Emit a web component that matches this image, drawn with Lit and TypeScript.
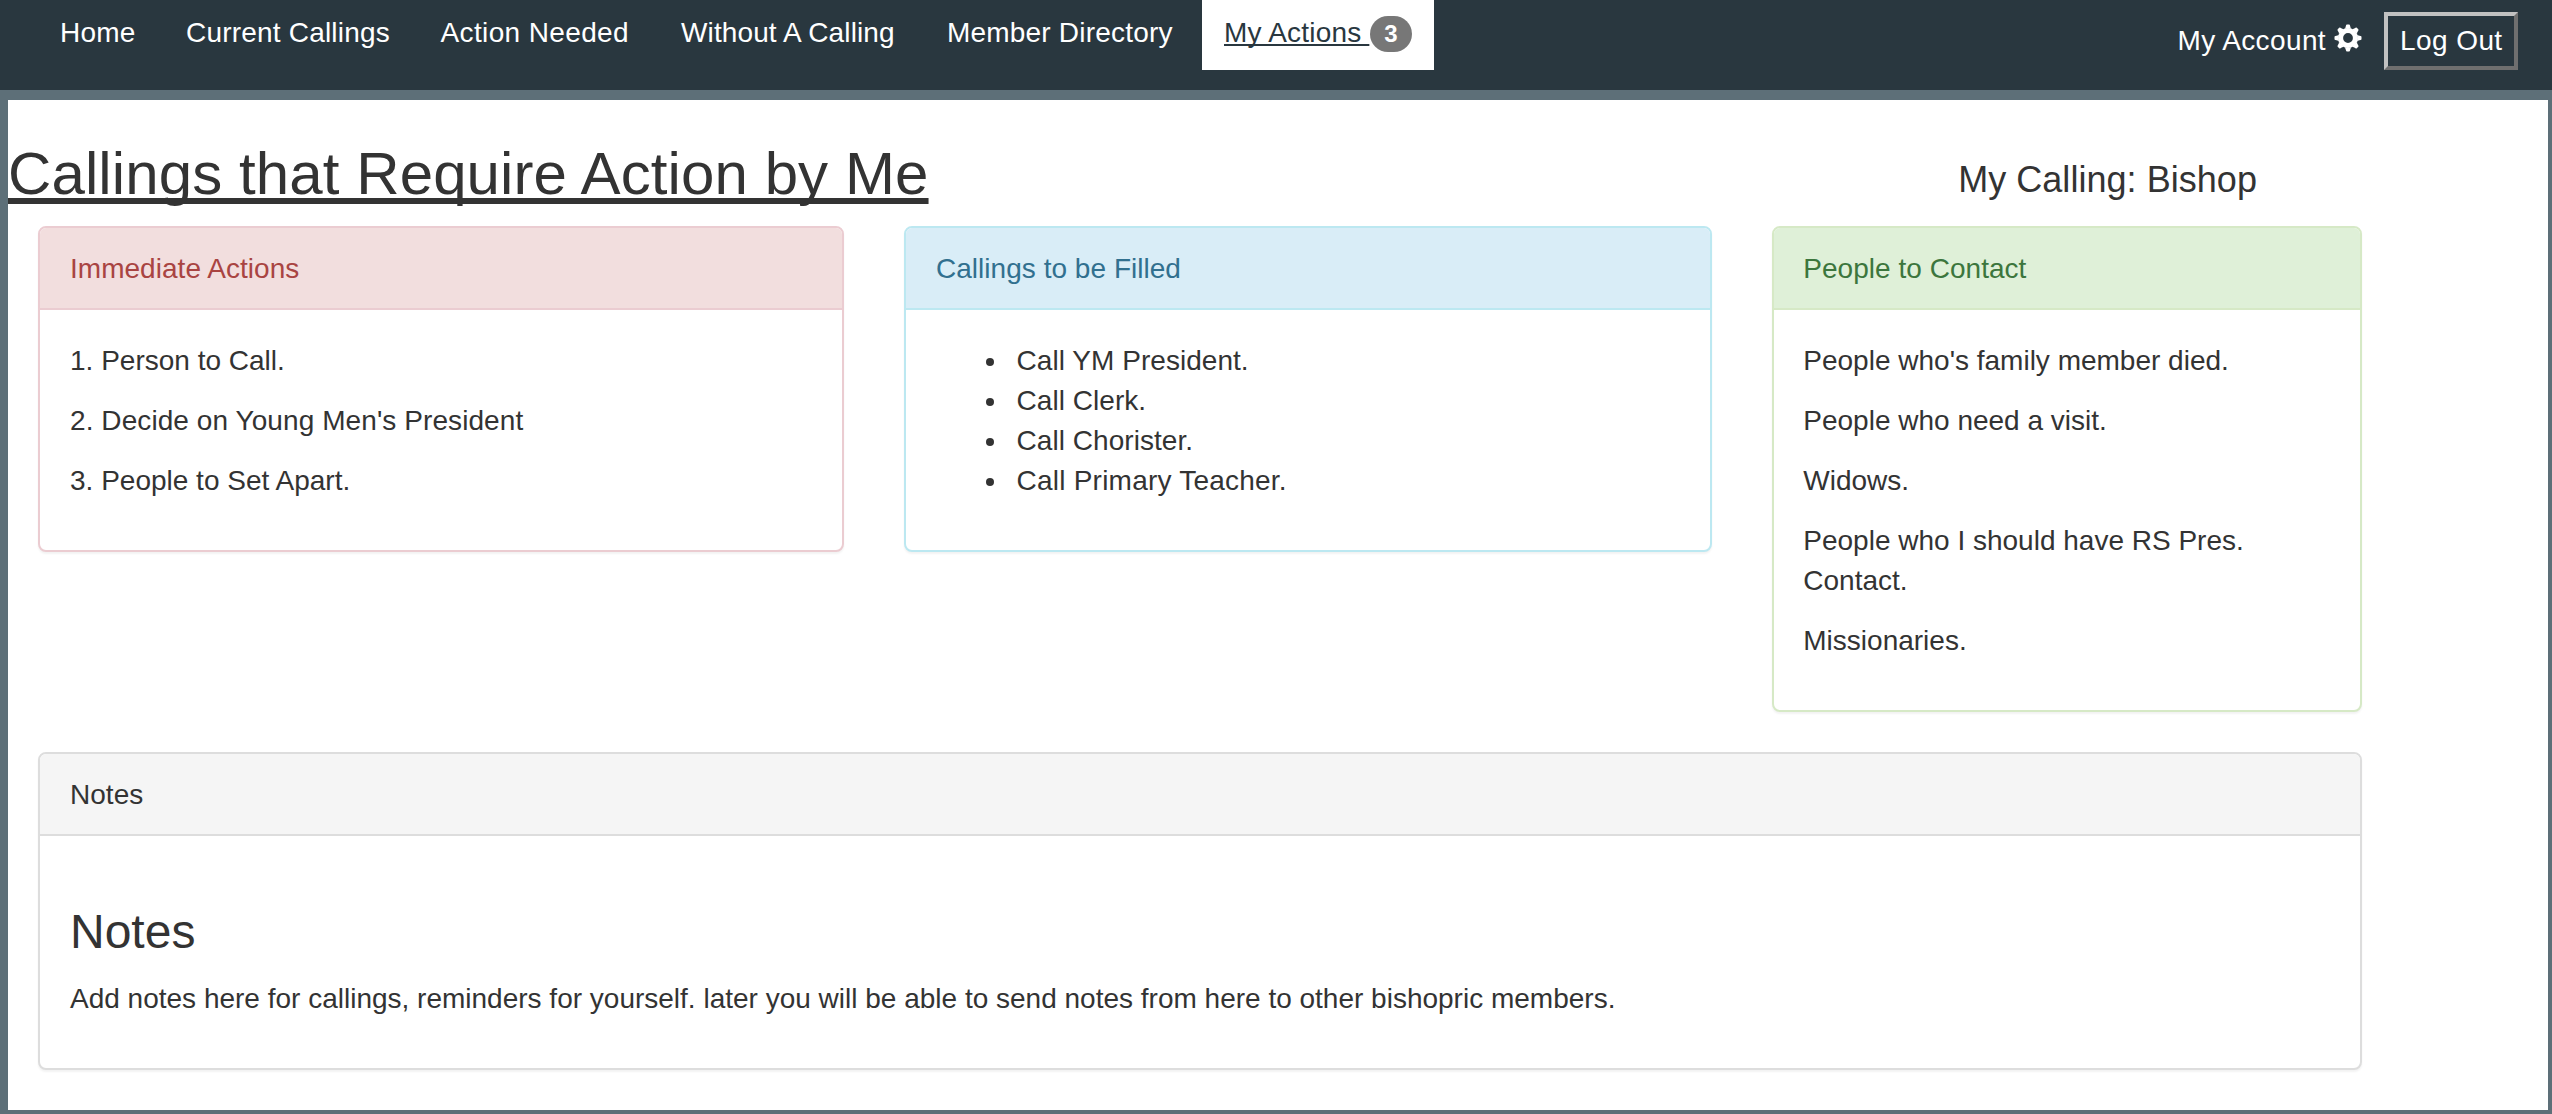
import { LitElement, html, css } from "lit";
import { customElement, property } from "lit/decorators.js";

@customElement("action-panel")
class ActionPanel extends LitElement {
  @property() heading = "";
  @property({ reflect: true }) tone = "default";

  static styles = css`
    :host {
      display: block;
      box-sizing: border-box;
      border: 2px solid var(--edge);
      border-radius: 8px;
      background: #fff;
      box-shadow: 0 2px 2px rgba(0, 0, 0, 0.05);
      --edge: #ddd;
      --fill: #f5f5f5;
      --ink: #333;
    }
    :host([tone="danger"]) {
      --edge: #ebccd1;
      --fill: #f2dede;
      --ink: #a94442;
    }
    :host([tone="info"]) {
      --edge: #bce8f1;
      --fill: #d9edf7;
      --ink: #31708f;
    }
    :host([tone="success"]) {
      --edge: #d6e9c6;
      --fill: #dff0d8;
      --ink: #3c763d;
    }
    .heading {
      padding: 21px 30px 19px;
      border-bottom: 2px solid var(--edge);
      border-radius: 6px 6px 0 0;
      background: var(--fill);
      color: var(--ink);
      letter-spacing: 0.03px;
    }
    .body {
      padding: 31px 30px 29px;
    }
    :host([tone="success"]) .heading,
    :host([tone="success"]) .body {
      padding-left: 29.3px;
    }
  `;

  render() {
    return html`
      <div class="heading">${this.heading}</div>
      <div class="body"><slot></slot></div>
    `;
  }
}

@customElement("app-root")
class AppRoot extends LitElement {
  static styles = css`
    :host {
      display: block;
      font-family: "Liberation Sans", Arial, sans-serif;
      font-size: 28px;
      line-height: 40px;
      color: #333;
    }
    * {
      box-sizing: border-box;
    }
    .page {
      height: 1114px;
      display: flex;
      flex-direction: column;
      background: #5d6f78;
      overflow: hidden;
    }
    .topbar {
      height: 90px;
      flex: none;
      display: flex;
      justify-content: space-between;
      align-items: flex-start;
      padding: 0 34px 0 60px;
      background: #29373f;
      color: #fff;
    }
    .nav {
      display: grid;
      grid-template-columns: 126px 254.5px 240.5px 266px 255px 232px;
    }
    .link {
      height: 70px;
      padding-top: 13px;
      color: inherit;
      text-decoration: none;
      white-space: nowrap;
      letter-spacing: 0.2px;
    }
    .link.loose {
      letter-spacing: 0.37px;
    }
    .link.snug {
      letter-spacing: 0.12px;
    }
    .link.active {
      display: flex;
      justify-content: space-between;
      padding-left: 22px;
      padding-right: 22px;
      background: #fff;
      color: #29373f;
      letter-spacing: 0.2px;
    }
    .label {
      width: 146px;
      height: 40px;
      white-space: pre;
      text-decoration: underline;
      text-decoration-thickness: 2px;
      text-decoration-skip-ink: none;
      text-underline-offset: 2px;
    }
    .badge {
      width: 42px;
      height: 36px;
      margin-top: 3px;
      border-radius: 20px;
      background: #777;
      color: #fff;
      font-size: 24px;
      font-weight: bold;
      line-height: 36px;
      text-align: center;
      letter-spacing: 0;
    }
    .account {
      display: flex;
      align-items: flex-start;
      padding-top: 12px;
    }
    .account-link {
      display: flex;
      padding-top: 9px;
      margin-right: 22px;
      color: #fff;
      text-decoration: none;
      letter-spacing: 0.38px;
    }
    .gear {
      width: 28px;
      height: 28px;
      margin: 3px 0 0 8px;
      fill: #fff;
    }
    .logout {
      width: 134px;
      height: 58px;
      padding: 5px 0 5px 12px;
      border: 4px solid;
      border-color: #c1c1c1 #6f6f6f #6f6f6f #c1c1c1;
      background: transparent;
      color: #fff;
      font: inherit;
      line-height: 40px;
      letter-spacing: 0.42px;
      text-align: left;
      white-space: nowrap;
    }
    .sheet {
      height: 1010px;
      flex: none;
      margin: 10px 4px 0 8px;
      padding-top: 40px;
      background: #fff;
    }
    .titles {
      display: flex;
      justify-content: space-between;
      width: 2249px;
      height: 66px;
      margin-bottom: 20px;
    }
    .title {
      margin: 1px 0 0;
      font-size: 60px;
      font-weight: normal;
      line-height: 66px;
      letter-spacing: 0.1px;
      text-decoration: underline;
      text-decoration-thickness: 6px;
      text-decoration-skip-ink: none;
      text-underline-offset: 4px;
    }
    .calling {
      margin: 20px 0 0;
      font-size: 36px;
      font-weight: normal;
      line-height: 40px;
      letter-spacing: 0.04px;
    }
    .panels {
      display: grid;
      grid-template-columns: 806px 808px 590px;
      column-gap: 60px;
      align-items: start;
      margin: 0 0 40px 30px;
    }
    .notes {
      width: 2324px;
      margin-left: 30px;
    }
    .item {
      margin: 0 0 20px;
    }
    .item.roomy {
      letter-spacing: 0.08px;
    }
    .note {
      margin: 0 0 20px;
    }
    .list {
      margin: 0 0 20px;
      padding: 0 0 0 50px;
      list-style: none;
    }
    .list li {
      display: flex;
      letter-spacing: 0.04px;
    }
    .list li::before {
      content: "";
      width: 8px;
      height: 8px;
      margin: 17px 22.6px 0 0;
      border-radius: 50%;
      background: #333;
    }
    .list li.wide {
      letter-spacing: 0.22px;
    }
    .subtitle {
      margin: 39px 0 21px;
      font-size: 48px;
      font-weight: normal;
      line-height: 52px;
    }
  `;

  private gear() {
    return html`
      <svg class="gear" viewBox="-14 -14 28 28" aria-hidden="true">
        <circle r="7.4" fill="none" stroke="#fff" stroke-width="5" />
        ${[0, 45, 90, 135, 180, 225, 270, 315].map(
          (a) => html`<svg x="-14" y="-14" width="28" height="28" viewBox="-14 -14 28 28">
            <path transform="rotate(${a})" d="M-3.6-9.2Q-2.4-10-2-12.6Q-1.9-13.5-1-13.5H1Q1.9-13.5 2-12.6Q2.4-10 3.6-9.2Z" />
          </svg>`
        )}
      </svg>
    `;
  }

  render() {
    return html`
      <div class="page">
        <header class="topbar">
          <nav class="nav">
            <a class="link">Home</a>
            <a class="link">Current Callings</a>
            <a class="link loose">Action Needed</a>
            <a class="link snug">Without A Calling</a>
            <a class="link">Member Directory</a>
            <a class="link active"><span class="label">My Actions </span><span class="badge">3</span></a>
          </nav>
          <div class="account">
            <a class="account-link">My Account${this.gear()}</a>
            <button class="logout">Log Out</button>
          </div>
        </header>
        <main class="sheet">
          <div class="titles">
            <h2 class="title">Callings that Require Action by Me</h2>
            <h4 class="calling">My Calling: Bishop</h4>
          </div>
          <div class="panels">
            <action-panel tone="danger" heading="Immediate Actions">
              <p class="item">1. Person to Call.</p>
              <p class="item roomy">2. Decide on Young Men's President</p>
              <p class="item">3. People to Set Apart.</p>
            </action-panel>
            <action-panel tone="info" heading="Callings to be Filled">
              <ul class="list">
                <li>Call YM President.</li>
                <li>Call Clerk.</li>
                <li>Call Chorister.</li>
                <li class="wide">Call Primary Teacher.</li>
              </ul>
            </action-panel>
            <action-panel tone="success" heading="People to Contact">
              <p class="item">People who's family member died.</p>
              <p class="item">People who need a visit.</p>
              <p class="item">Widows.</p>
              <p class="item">People who I should have RS Pres. Contact.</p>
              <p class="item">Missionaries.</p>
            </action-panel>
          </div>
          <action-panel class="notes" heading="Notes">
            <h3 class="subtitle">Notes</h3>
            <p class="note">
              Add notes here for callings, reminders for yourself. later you will be able to send notes from here to other
              bishopric members.
            </p>
          </action-panel>
        </main>
      </div>
    `;
  }
}
